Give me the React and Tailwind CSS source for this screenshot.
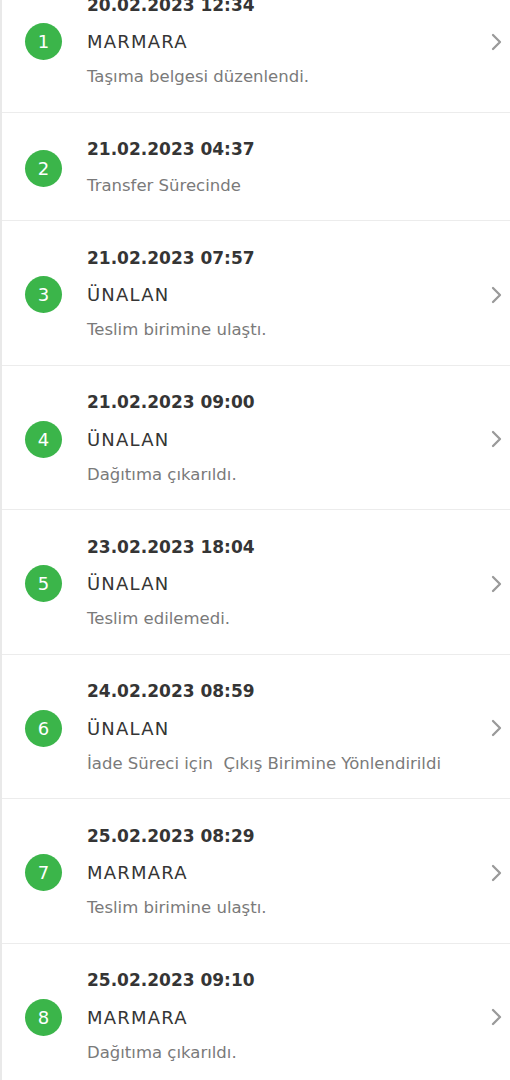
import React from 'react';

const steps = [
    { date: "20.02.2023 12:34", place: "MARMARA", status: "Taşıma belgesi düzenlendi." },
    { date: "21.02.2023 04:37", place: null, status: "Transfer Sürecinde" },
    { date: "21.02.2023 07:57", place: "ÜNALAN", status: "Teslim birimine ulaştı." },
    { date: "21.02.2023 09:00", place: "ÜNALAN", status: "Dağıtıma çıkarıldı." },
    { date: "23.02.2023 18:04", place: "ÜNALAN", status: "Teslim edilemedi." },
    { date: "24.02.2023 08:59", place: "ÜNALAN", status: "İade Süreci için  Çıkış Birimine Yönlendirildi" },
    { date: "25.02.2023 08:29", place: "MARMARA", status: "Teslim birimine ulaştı." },
    { date: "25.02.2023 09:10", place: "MARMARA", status: "Dağıtıma çıkarıldı." },
];

const Chevron = () => (
    <svg width="11" height="18" viewBox="0 0 11 18" fill="none">
        <path d="M2 2l7 7-7 7" stroke="#9a9a9a" strokeWidth="2.3" strokeLinecap="round" strokeLinejoin="round" />
    </svg>
);

const StepRow = ({ index, step }) => {
    return (
        <div className="flex items-center pl-[23px] pr-[8px] pt-[19.5px] pb-[16px] border-b border-[#ececec]">
            {/* number badge */}
            <div className="w-[37px] h-[37px] rounded-full bg-[#3bb54a] flex items-center justify-center text-white text-[18px] shrink-0">
                {index}
            </div>

            <div className="flex-1 ml-[25px] flex flex-col">
                <div className="h-[36px] flex items-center text-[17px] font-bold text-[#353535]">
                    {step.date}
                </div>
                {step.place && (
                    <div className="h-[36px] flex items-center text-[18px] tracking-[1.2px] text-[#353535]">
                        {step.place}
                    </div>
                )}
                <div className="h-[36px] flex items-center text-[16.5px] text-[#7a7a7a] whitespace-pre">
                    {step.status}
                </div>
            </div>

            {step.place && (
                <div className="shrink-0 flex items-center">
                    <Chevron />
                </div>
            )}
        </div>
    );
};

const App = () => {
    return (
        <div className="w-[510px] h-[1080px] overflow-hidden bg-white" style={{ fontFamily: "'DejaVu Sans', sans-serif" }}>
            <div className="-mt-[32px] border-l-2 border-[#e9e9e9]">
                {steps.map((step, i) => (
                    <StepRow key={i} index={i + 1} step={step} />
                ))}
            </div>
        </div>
    );
};

export default App;
